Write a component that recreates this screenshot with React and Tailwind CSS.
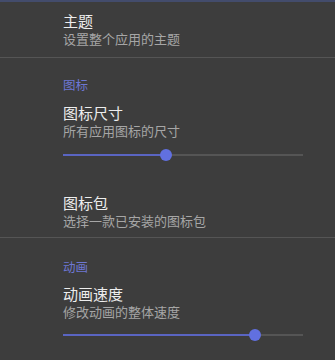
import React from 'react';

const font = { fontFamily: '"Noto Sans CJK SC", "Noto Sans", sans-serif' };

function Title({ children, className = '' }) {
  return <div className={`text-[15px] leading-[19px] text-[#ededed] ${className}`}>{children}</div>;
}

function Summary({ children }) {
  return <div className="text-[13px] leading-[17px] text-[#a6a6a6]">{children}</div>;
}

function Category({ children, className = '' }) {
  return <div className={`text-[12.5px] leading-[16px] text-[#6d77d4] ${className}`}>{children}</div>;
}

function Slider({ value, className = '' }) {
  return (
    <div className={`relative flex h-[20px] w-[240px] items-center ${className}`}>
      <div className="h-[2px] bg-[#5a65c2]" style={{ width: `${value}%` }} />
      <div className="h-[2px] flex-1 bg-[#555555]" />
      <div
        className="absolute top-[4px] h-[12px] w-[12px] -translate-x-1/2 rounded-full bg-[#6170e0]"
        style={{ left: `${value}%` }}
      />
    </div>
  );
}

export default function App() {
  return (
    <div className="h-[360px] w-[335px] overflow-hidden bg-[#3d3d3d]" style={font}>
      <div className="h-[2px] bg-[#434c6c]" />

      <div className="pl-[63px] pt-[9px] pb-[10px]">
        <Title>主题</Title>
        <Summary>设置整个应用的主题</Summary>
      </div>

      <div className="h-px bg-[#555555]" />

      <div className="pl-[63px] pt-[19px] pb-[8px]">
        <Category>图标</Category>
        <Title className="mt-[10px]">图标尺寸</Title>
        <Summary>所有应用图标的尺寸</Summary>
        <Slider value={43} className="mt-[6px]" />
        <Title className="mt-[28px]">图标包</Title>
        <Summary>选择一款已安装的图标包</Summary>
      </div>

      <div className="h-px bg-[#555555]" />

      <div className="pl-[63px] pt-[21px]">
        <Category>动画</Category>
        <Title className="mt-[9px]">动画速度</Title>
        <Summary>修改动画的整体速度</Summary>
        <Slider value={80} className="mt-[5px]" />
      </div>
    </div>
  );
}
